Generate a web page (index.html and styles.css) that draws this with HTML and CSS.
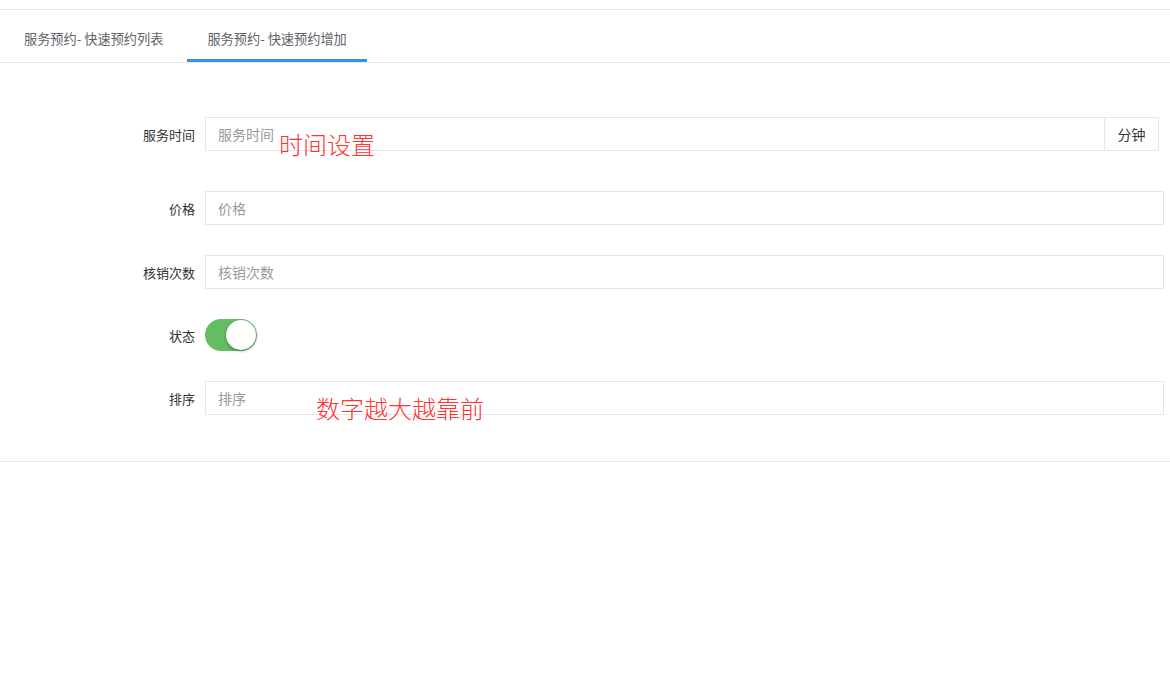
FILE: index.html
```html
<!DOCTYPE html>
<html lang="zh-CN">
<head>
    <meta charset="UTF-8">
    <title>服务预约</title>
    <link rel="stylesheet" href="styles.css">
</head>
<body>
    <div class="page">
        <ul class="tabs">
            <li class="tab">服务预约- 快速预约列表</li>
            <li class="tab active">服务预约- 快速预约增加</li>
        </ul>

        <form class="form">
            <div class="row first">
                <label class="label">服务时间</label>
                <div class="field">
                    <div class="group">
                        <input class="input" type="text" placeholder="服务时间">
                        <span class="addon">分钟</span>
                    </div>
                    <span class="note note-time">时间设置</span>
                </div>
            </div>

            <div class="row">
                <label class="label">价格</label>
                <div class="field">
                    <input class="input" type="text" placeholder="价格">
                </div>
            </div>

            <div class="row">
                <label class="label">核销次数</label>
                <div class="field">
                    <input class="input" type="text" placeholder="核销次数">
                </div>
            </div>

            <div class="row switch-row">
                <label class="label">状态</label>
                <div class="field">
                    <span class="switch on"><span class="knob"></span></span>
                </div>
            </div>

            <div class="row last">
                <label class="label">排序</label>
                <div class="field">
                    <input class="input" type="text" placeholder="排序">
                    <span class="note note-sort">数字越大越靠前</span>
                </div>
            </div>
        </form>
    </div>
</body>
</html>
```

FILE: styles.css
```css
body {
    margin: 0;
    background: #fff;
    font-family: "Noto Sans CJK SC", "Noto Sans", sans-serif;
    color: #333;
}

.page {
    margin-top: 9px;
    border-top: 1px solid #e7eaec;
}

.tabs {
    list-style: none;
    margin: 0;
    padding: 0 0 0 4px;
    display: flex;
    border-bottom: 1px solid #e7eaec;
}

.tab {
    height: 49px;
    line-height: 57px;
    padding: 0 20px;
    font-size: 13.2px;
    color: #5f6368;
    border-bottom: 3px solid transparent;
}

.tab.active {
    margin-left: 4px;
    border-bottom-color: #3a8ee6;
}

.form {
    padding: 54px 6px 46px 0;
    border-bottom: 1px solid #e7eaec;
}

.row {
    display: flex;
    align-items: center;
    margin-bottom: 30px;
}

.row.first {
    margin-bottom: 40px;
}

.row.last {
    margin-bottom: 0;
}

.label {
    width: 205px;
    padding-right: 10px;
    box-sizing: border-box;
    text-align: right;
    font-size: 13px;
    color: #333;
}

.field {
    flex: 1;
    position: relative;
}

.group {
    display: flex;
    margin-right: 5px;
}

.input {
    display: block;
    width: 100%;
    height: 34px;
    box-sizing: border-box;
    border: 1px solid #e5e6e7;
    padding: 0 12px;
    font-family: inherit;
    font-size: 14px;
    color: #333;
    outline: none;
}

.input::placeholder {
    color: #999;
}

.group .input {
    flex: 1;
}

.addon {
    width: 54px;
    height: 34px;
    box-sizing: border-box;
    border: 1px solid #e5e6e7;
    border-left: none;
    line-height: 32px;
    text-align: center;
    font-size: 14px;
    color: #333;
}

.note {
    position: absolute;
    color: #f33;
    font-family: "Liberation Serif", "Noto Sans CJK SC", serif;
    font-weight: 300;
    font-size: 24px;
    line-height: 24px;
    white-space: nowrap;
}

.note-time {
    left: 74px;
    top: 17px;
}

.note-sort {
    left: 111px;
    top: 17px;
}

.switch {
    display: block;
    width: 52px;
    height: 32px;
    border-radius: 16px;
    background: #64bd63;
    position: relative;
}

.knob {
    position: absolute;
    top: 1px;
    right: 1px;
    width: 30px;
    height: 30px;
    border-radius: 50%;
    background: #fff;
    box-shadow: 0 1px 3px rgba(0, 0, 0, 0.4);
}
```
